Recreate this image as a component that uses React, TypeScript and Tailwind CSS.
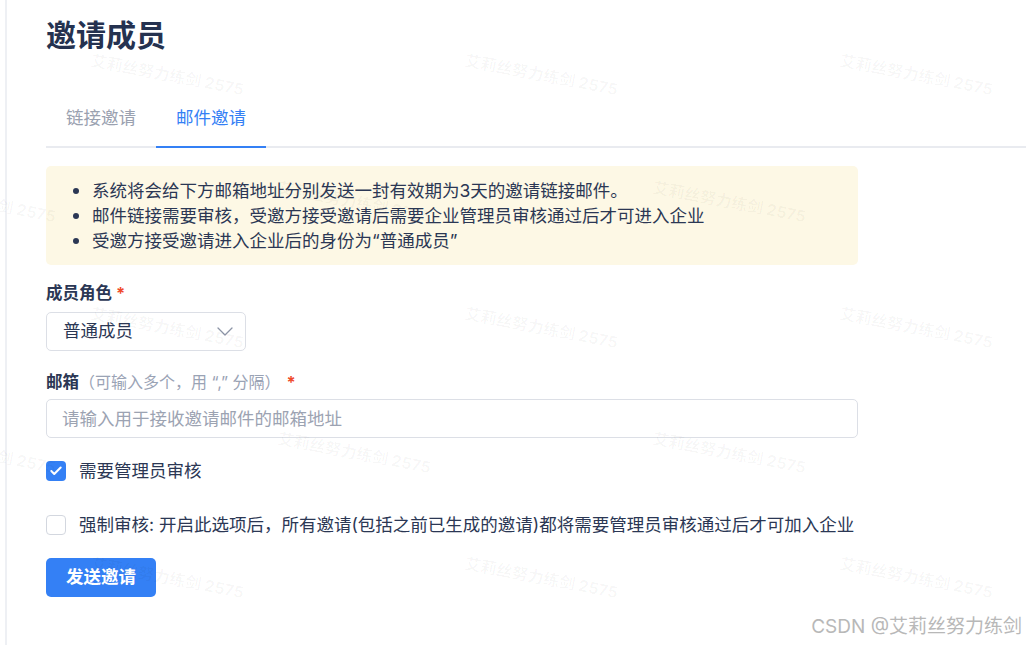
import { Check } from 'lucide-react';

const watermarks = [
    { x: 93, y: 50 }, { x: 467, y: 50 }, { x: 842, y: 50 },
    { x: -95, y: 177 }, { x: 280, y: 177 }, { x: 655, y: 177 },
    { x: 93, y: 303 }, { x: 467, y: 303 }, { x: 842, y: 303 },
    { x: -95, y: 428 }, { x: 280, y: 428 }, { x: 655, y: 428 },
    { x: 93, y: 553 }, { x: 467, y: 553 }, { x: 842, y: 553 },
];

const notes = [
    '系统将会给下方邮箱地址分别发送一封有效期为3天的邀请链接邮件。',
    '邮件链接需要审核，受邀方接受邀请后需要企业管理员审核通过后才可进入企业',
    '受邀方接受邀请进入企业后的身份为“普通成员”',
];

const App = () => {
    return (
        <div className="relative flex min-h-[645px] w-full overflow-hidden bg-white font-['Inter','Noto_Sans_CJK_SC',sans-serif] text-[#2b3754]">
            <div className="w-[5px] shrink-0"></div>

            <main className="flex-1 border-l-2 border-[#eef0f4] pl-[39px]">
                {/* Header */}
                <h1 className="pt-[15px] text-[30px] font-bold leading-[40px] text-[#253250]">邀请成员</h1>

                {/* Tabs */}
                <div className="mt-[35px] flex border-b-2 border-[#e9ebf0]">
                    <button className="-mb-[2px] flex h-[58px] w-[110px] items-center justify-center border-b-2 border-transparent text-[17.5px] text-[#9aa1b0]">
                        链接邀请
                    </button>
                    <button className="-mb-[2px] flex h-[58px] w-[110px] items-center justify-center border-b-2 border-[#3480f5] text-[17.5px] text-[#3480f5]">
                        邮件邀请
                    </button>
                </div>

                <div className="w-[812px]">
                    {/* Notice */}
                    <ul className="mt-[18px] rounded-[5px] bg-[#fdf8e5] py-3 text-[17.5px] leading-[25px]">
                        {notes.map((note, i) => (
                            <li key={i} className="flex items-center">
                                <span className="ml-[27px] h-[6px] w-[6px] shrink-0 rounded-full bg-[#2b3754]"></span>
                                <span className="ml-[13px]">{note}</span>
                            </li>
                        ))}
                    </ul>

                    {/* Role */}
                    <div className="mt-4 text-[16.5px] font-bold leading-6">
                        成员角色<span className="ml-1 text-[#ef4a2b]">*</span>
                    </div>
                    <div className="mt-[7px] flex h-[39px] w-[200px] items-center justify-between rounded-[5px] border border-[#dcdfe6] pl-4 pr-3">
                        <span className="text-[17.5px]">普通成员</span>
                        <svg width="16" height="9" viewBox="0 0 16 9" fill="none" className="text-[#8c94a6]">
                            <polyline points="1,1 8,8 15,1" stroke="currentColor" strokeWidth="1.3" strokeLinejoin="round" strokeLinecap="round" />
                        </svg>
                    </div>

                    {/* Email */}
                    <div className="mt-[20px] flex items-center text-[16.5px] leading-[22px]">
                        <span className="font-bold">邮箱</span>
                        <span className="text-[16px] text-[#9aa3b5]">（可输入多个，用 “,” 分隔）</span>
                        <span className="ml-[6px] font-bold text-[#ef4a2b]">*</span>
                    </div>
                    <input
                        className="mt-[6px] h-[39px] w-full rounded-[5px] border border-[#dcdfe6] pl-[15px] text-[17.5px] outline-none placeholder:text-[#9ca3b2]"
                        placeholder="请输入用于接收邀请邮件的邮箱地址"
                    />

                    {/* Options */}
                    <label className="mt-[23px] flex items-center">
                        <span className="flex h-5 w-5 items-center justify-center rounded-[4px] bg-[#3480f5] text-white">
                            <Check size={14} strokeWidth={3.5} />
                        </span>
                        <span className="ml-[13px] text-[17.5px] leading-5">需要管理员审核</span>
                    </label>
                    <label className="mt-[34px] flex items-center">
                        <span className="h-5 w-5 rounded-[4px] border border-[#d3d7df] bg-white"></span>
                        <span className="ml-[13px] whitespace-nowrap text-[17.5px] leading-5">
                            强制审核: 开启此选项后，所有邀请(包括之前已生成的邀请)都将需要管理员审核通过后才可加入企业
                        </span>
                    </label>

                    <button className="mt-[23px] h-[39px] w-[110px] rounded-[5px] bg-[#3480f5] text-[17.5px] font-bold text-white">
                        发送邀请
                    </button>
                </div>
            </main>

            {/* Watermarks */}
            {watermarks.map((w, i) => (
                <span
                    key={i}
                    className="pointer-events-none absolute origin-top-left rotate-[11deg] whitespace-nowrap text-[16px] font-bold leading-5 text-black/[0.035]"
                    style={{ left: w.x, top: w.y }}
                >
                    艾莉丝努力练剑 2575
                </span>
            ))}

            <span className="pointer-events-none absolute bottom-[6px] right-[4px] whitespace-nowrap text-[19px] leading-6 text-[#b8b8b8]">
                CSDN @艾莉丝努力练剑
            </span>
        </div>
    );
};

export default App;
